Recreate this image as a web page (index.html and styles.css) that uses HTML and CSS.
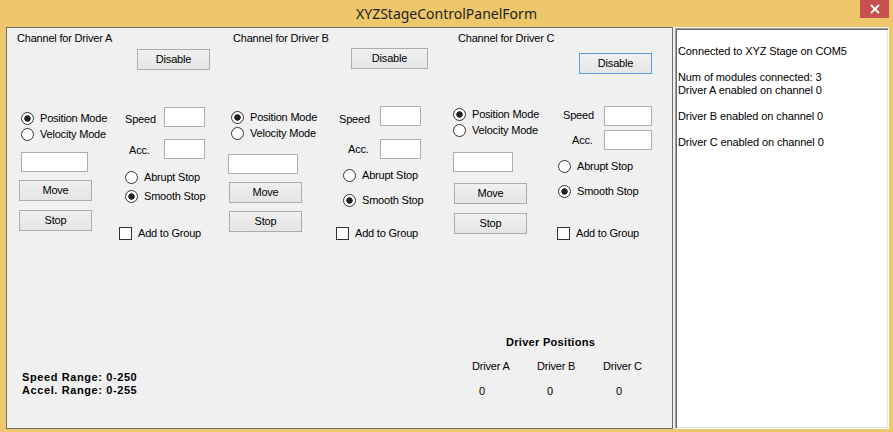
FILE: index.html
```html
<!DOCTYPE html>
<html>
<head>
<meta charset="utf-8">
<title>XYZStageControlPanelForm</title>
<link rel="stylesheet" href="styles.css">
</head>
<body>
<div class="window">
  <div class="titlebar">
    <div class="tb-spacer"></div>
    <div class="title">XYZStageControlPanelForm</div>
    <div class="tb-right">
      <div class="close-btn">
        <svg width="10" height="10" viewBox="0 0 10 10"><path d="M1 1 L9 9 M9 1 L1 9" stroke="#fff" stroke-width="1.8" fill="none"/></svg>
      </div>
    </div>
  </div>
  <div class="client">
    <div class="left-panel">
      <div class="channels">
        <div class="channel ch-a">
          <div class="ch-title">Channel for Driver A</div>
          <button class="btn btn-disable">Disable</button>
          <div class="ch-body">
            <div class="col-left">
              <div class="radio"><span class="rb on"></span><span>Position Mode</span></div>
              <div class="radio"><span class="rb"></span><span>Velocity Mode</span></div>
              <input class="tb tb-pos" type="text">
              <button class="btn btn-move">Move</button>
              <button class="btn btn-stop">Stop</button>
            </div>
            <div class="col-right">
              <div class="field-row"><span class="lbl lbl-speed">Speed</span><input class="tb tb-s" type="text"></div>
              <div class="field-row row-acc"><span class="lbl lbl-acc">Acc.</span><input class="tb tb-s" type="text"></div>
              <div class="radio radio-abrupt"><span class="rb"></span><span>Abrupt Stop</span></div>
              <div class="radio radio-smooth"><span class="rb on"></span><span>Smooth Stop</span></div>
              <div class="check"><span class="cb"></span><span>Add to Group</span></div>
            </div>
          </div>
        </div>
        <div class="channel ch-b">
          <div class="ch-title">Channel for Driver B</div>
          <button class="btn btn-disable">Disable</button>
          <div class="ch-body">
            <div class="col-left">
              <div class="radio"><span class="rb on"></span><span>Position Mode</span></div>
              <div class="radio"><span class="rb"></span><span>Velocity Mode</span></div>
              <input class="tb tb-pos" type="text">
              <button class="btn btn-move">Move</button>
              <button class="btn btn-stop">Stop</button>
            </div>
            <div class="col-right">
              <div class="field-row"><span class="lbl lbl-speed">Speed</span><input class="tb tb-s" type="text"></div>
              <div class="field-row row-acc"><span class="lbl lbl-acc">Acc.</span><input class="tb tb-s" type="text"></div>
              <div class="radio radio-abrupt"><span class="rb"></span><span>Abrupt Stop</span></div>
              <div class="radio radio-smooth"><span class="rb on"></span><span>Smooth Stop</span></div>
              <div class="check"><span class="cb"></span><span>Add to Group</span></div>
            </div>
          </div>
        </div>
        <div class="channel ch-c">
          <div class="ch-title">Channel for Driver C</div>
          <button class="btn btn-disable btn-focus">Disable</button>
          <div class="ch-body">
            <div class="col-left">
              <div class="radio"><span class="rb on"></span><span>Position Mode</span></div>
              <div class="radio"><span class="rb"></span><span>Velocity Mode</span></div>
              <input class="tb tb-pos" type="text">
              <button class="btn btn-move">Move</button>
              <button class="btn btn-stop">Stop</button>
            </div>
            <div class="col-right">
              <div class="field-row"><span class="lbl lbl-speed">Speed</span><input class="tb tb-s" type="text"></div>
              <div class="field-row row-acc"><span class="lbl lbl-acc">Acc.</span><input class="tb tb-s" type="text"></div>
              <div class="radio radio-abrupt"><span class="rb"></span><span>Abrupt Stop</span></div>
              <div class="radio radio-smooth"><span class="rb on"></span><span>Smooth Stop</span></div>
              <div class="check"><span class="cb"></span><span>Add to Group</span></div>
            </div>
          </div>
        </div>
      </div>
      <div class="footer">
        <div class="ranges">
          <div>Speed Range: 0-250</div>
          <div>Accel. Range: 0-255</div>
        </div>
        <div class="positions">
          <div class="pos-title">Driver Positions</div>
          <div class="pos-grid">
            <div class="pos-head">Driver A</div>
            <div class="pos-head">Driver B</div>
            <div class="pos-head">Driver C</div>
            <div class="pos-val v-a">0</div>
            <div class="pos-val v-b">0</div>
            <div class="pos-val v-c">0</div>
          </div>
        </div>
      </div>
    </div>
    <div class="log">
      <div class="log-line"></div>
      <div class="log-line">Connected to XYZ Stage on COM5</div>
      <div class="log-line"></div>
      <div class="log-line">Num of modules connected: 3</div>
      <div class="log-line">Driver A enabled on channel 0</div>
      <div class="log-line"></div>
      <div class="log-line">Driver B enabled on channel 0</div>
      <div class="log-line"></div>
      <div class="log-line">Driver C enabled on channel 0</div>
    </div>
  </div>
</div>
</body>
</html>
```

FILE: styles.css
```css
* { box-sizing: border-box; }
html, body { margin: 0; padding: 0; }
body {
  width: 893px;
  height: 432px;
  overflow: hidden;
  background: #efc76b;
  font-family: "Liberation Sans", Arial, sans-serif;
  font-size: 11px;
  letter-spacing: -0.2px;
  color: #000;
}
.window { width: 893px; height: 432px; display: flex; flex-direction: column; }

/* title bar */
.titlebar {
  height: 27px;
  display: grid;
  grid-template-columns: 1fr auto 1fr;
}
.title {
  font-family: "Noto Sans", sans-serif;
  font-size: 14px;
  letter-spacing: 0;
  line-height: 18px;
  padding-top: 5px;
  color: #1e1e1e;
}
.tb-right { display: flex; justify-content: flex-end; }
.close-btn {
  width: 29px;
  height: 18px;
  margin-right: 4px;
  background: #c75050;
  display: flex;
  align-items: center;
  justify-content: center;
}
.close-btn svg { display: block; }

/* client */
.client {
  display: flex;
  margin-left: 6px;
  width: 883px;
  height: 402px;
  background: #f0f0f0;
}
.left-panel {
  width: 667px;
  height: 402px;
  border: 1px solid #6e6e6e;
  display: flex;
  flex-direction: column;
}
.log {
  width: 214px;
  height: 401px;
  margin: 1px 0 0 2px;
  background: #fff;
  border: 1px solid;
  border-color: #a0a0a0 #fff #fff #a0a0a0;
  box-shadow: inset 1px 1px 0 #696969, inset -1px -1px 0 #e3e3e3;
  padding: 3px 0 0 2px;
  line-height: 13px;
  letter-spacing: -0.1px;
}
.log-line { height: 13px; white-space: nowrap; }

/* channels */
.channels { display: flex; height: 308px; }
.channel {
  display: flex;
  flex-direction: column;
  align-items: flex-start;
  padding-top: 4px;
}
.ch-a { width: 215px; }
.ch-b { width: 223px; }
.ch-c { width: 227px; }
.ch-title { height: 13px; line-height: 13px; white-space: nowrap; }
.ch-a .ch-title { margin-left: 10px; }
.ch-b .ch-title { margin-left: 11px; }
.ch-c .ch-title { margin-left: 13px; }

.btn {
  width: 73px;
  height: 21px;
  padding: 0;
  border: 1px solid #acacac;
  background: linear-gradient(#f0f0f0, #e5e5e5);
  font-family: "Liberation Sans", Arial, sans-serif;
  font-size: 11px;
  letter-spacing: -0.2px;
  color: #000;
  line-height: 19px;
}
.btn-focus { border-color: #5d9ddb; }
.ch-a .btn-disable { margin: 4px 0 0 130px; }
.ch-b .btn-disable { margin: 3px 0 0 129px; width: 77px; }
.ch-c .btn-disable { margin: 8px 0 0 134px; }

.ch-body { display: flex; align-items: flex-start; }
.ch-a .ch-body { margin-top: 37px; }
.ch-b .ch-body { margin-top: 37px; }
.ch-c .ch-body { margin-top: 32px; }

.col-left, .col-right {
  display: flex;
  flex-direction: column;
  align-items: flex-start;
}
.ch-a .col-left { margin-left: 12px; padding-top: 3px; width: 100px; }
.ch-b .col-left { margin-left: 6px; padding-top: 3px; width: 108px; }
.ch-c .col-left { margin-left: 8px; padding-top: 0; width: 104px; }

.radio {
  display: flex;
  align-items: center;
  height: 16px;
  gap: 6px;
  white-space: nowrap;
}
.rb {
  width: 13px;
  height: 13px;
  border: 1px solid #333;
  border-radius: 50%;
  background: #fff;
  flex: none;
}
.rb.on { background: radial-gradient(circle, #222 0 2.9px, #fff 3.5px); }
.ch-a .col-left .radio { margin-left: 2px; }
.ch-b .col-left .radio { margin-left: 3px; }

.tb {
  display: block;
  height: 20px;
  border: 1px solid #abadb3;
  background: #fff;
  padding: 0;
  margin: 0;
  outline: none;
}
.ch-a .tb-pos { width: 67px; margin: 10px 0 0 2px; }
.ch-b .tb-pos { width: 70px; margin-top: 13px; }
.ch-c .tb-pos { width: 60px; margin-top: 14px; }

.ch-a .btn-move { margin-top: 8px; }
.ch-a .btn-stop { margin-top: 9px; }
.ch-b .btn-move { margin: 8px 0 0 1px; }
.ch-b .btn-stop { margin: 8px 0 0 1px; }
.ch-c .btn-move { margin: 11px 0 0 1px; }
.ch-c .btn-stop { margin: 9px 0 0 1px; }

.field-row {
  display: flex;
  align-items: center;
  justify-content: space-between;
  height: 20px;
}
.tb-s { width: 41px; }
.ch-c .tb-s { width: 48px; }
.ch-a .field-row { width: 86px; }
.ch-b .field-row { width: 85px; }
.ch-c .field-row { width: 95px; }
.ch-a .lbl-speed { margin: 4px 0 0 6px; }
.ch-a .lbl-acc { margin: 2px 0 0 10px; }
.ch-b .lbl-speed { margin: 5px 0 0 3px; }
.ch-b .lbl-acc { margin: 0 0 0 12px; }
.ch-c .lbl-speed { margin: 0 0 3px 6px; }
.ch-c .lbl-acc { margin: 0 0 0 15px; }

.ch-a .row-acc { margin-top: 12px; }
.ch-b .row-acc { margin-top: 13px; }
.ch-c .row-acc { margin-top: 4px; }

.ch-a .radio-abrupt { margin: 10px 0 0 6px; }
.ch-a .radio-smooth { margin: 3px 0 0 6px; }
.ch-b .radio-abrupt { margin: 8px 0 0 7px; }
.ch-b .radio-smooth { margin: 9px 0 0 7px; }
.ch-c .radio-abrupt { margin: 8px 0 0 1px; }
.ch-c .radio-smooth { margin: 9px 0 0 1px; }

.check {
  display: flex;
  align-items: center;
  height: 16px;
  gap: 6px;
  white-space: nowrap;
}
.cb {
  width: 13px;
  height: 13px;
  border: 1px solid #333;
  background: #fff;
  flex: none;
}
.ch-a .check { margin-top: 21px; }
.ch-b .check { margin-top: 17px; }
.ch-c .check { margin-top: 26px; }

/* footer */
.footer { display: flex; align-items: flex-start; }
.ranges {
  width: 130px;
  margin: 35px 0 0 15px;
  font-weight: bold;
  letter-spacing: 0.6px;
  line-height: 13px;
  white-space: nowrap;
}
.positions { margin-left: 320px; }
.pos-title {
  margin-left: 34px;
  font-weight: bold;
  letter-spacing: 0.3px;
  line-height: 13px;
  white-space: nowrap;
}
.pos-grid {
  display: grid;
  grid-template-columns: 65px 66px 60px;
  grid-template-rows: 13px 13px;
  row-gap: 12px;
  margin-top: 11px;
  line-height: 13px;
  white-space: nowrap;
}
.v-a { padding-left: 7px; }
.v-b { padding-left: 10px; }
.v-c { padding-left: 13px; }
```
